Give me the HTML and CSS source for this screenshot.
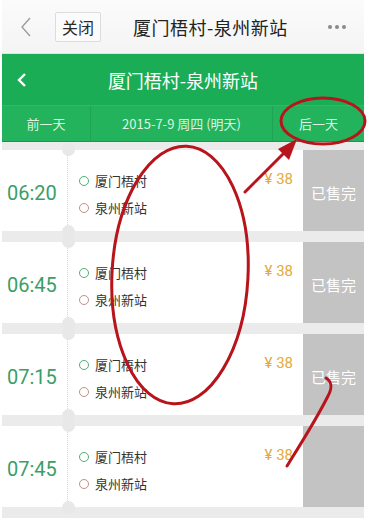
FILE: index.html
```html
<!DOCTYPE html>
<html lang="zh">
<head>
<meta charset="utf-8">
<title>厦门梧村-泉州新站</title>
<link rel="stylesheet" href="styles.css">
</head>
<body>
<div class="screen">
  <header class="topbar">
    <svg class="tb-back" width="12" height="22" viewBox="0 0 12 22"><polyline points="10,2 2,11 10,20" fill="none" stroke="#9a9a9a" stroke-width="1.3"/></svg>
    <button class="tb-close">关闭</button>
    <div class="tb-title">厦门梧村-泉州新站</div>
    <div class="tb-more"><i></i><i></i><i></i></div>
  </header>

  <div class="nav">
    <div class="nav-title">
      <svg class="nav-back" width="10" height="16" viewBox="0 0 10 16"><polyline points="8,2 2,8 8,14" fill="none" stroke="#fff" stroke-width="2.4"/></svg>
      <h1>厦门梧村-泉州新站</h1>
    </div>
    <div class="datebar">
      <div class="cell prev">前一天</div>
      <div class="cell date">2015-7-9 周四 (明天)</div>
      <div class="cell next">后一天</div>
    </div>
  </div>

  <div class="list">
    <div class="trip">
      <div class="time">06:20</div>
      <div class="route">
        <ul class="stations">
          <li class="from">厦门梧村</li>
          <li class="to">泉州新站</li>
        </ul>
        <div class="price">¥ 38</div>
      </div>
      <div class="sold">已售完</div>
    </div>
    <div class="trip">
      <div class="time">06:45</div>
      <div class="route">
        <ul class="stations">
          <li class="from">厦门梧村</li>
          <li class="to">泉州新站</li>
        </ul>
        <div class="price">¥ 38</div>
      </div>
      <div class="sold">已售完</div>
    </div>
    <div class="trip">
      <div class="time">07:15</div>
      <div class="route">
        <ul class="stations">
          <li class="from">厦门梧村</li>
          <li class="to">泉州新站</li>
        </ul>
        <div class="price">¥ 38</div>
      </div>
      <div class="sold">已售完</div>
    </div>
    <div class="trip">
      <div class="time">07:45</div>
      <div class="route">
        <ul class="stations">
          <li class="from">厦门梧村</li>
          <li class="to">泉州新站</li>
        </ul>
        <div class="price">¥ 38</div>
      </div>
      <div class="sold"></div>
    </div>
  </div>

  <svg class="marks" width="367" height="518" viewBox="0 0 367 518">
    <g fill="none" stroke="#b8141c" stroke-width="3" stroke-linecap="round">
      <ellipse cx="180" cy="275" rx="68" ry="129" transform="rotate(3 180 275)"/>
      <ellipse cx="323" cy="121" rx="42" ry="23"/>
      <line x1="245" y1="192" x2="286" y2="151"/>
      <path d="M326 378 C 331 381, 333 387, 328 396 C 316 420, 300 445, 287 466"/>
    </g>
    <polygon points="297,139 278,149 289,160" fill="#b8141c"/>
  </svg>
</div>
</body>
</html>
```

FILE: styles.css
```css
* { box-sizing: border-box; }
html, body { margin: 0; padding: 0; background: #fff; }
body {
  width: 367px;
  height: 518px;
  overflow: hidden;
  font-family: "Noto Sans", "Noto Sans CJK SC", sans-serif;
}
.screen {
  position: relative;
  width: 362px;
  margin-left: 2px;
  height: 518px;
}

/* top browser bar */
.topbar {
  height: 54px;
  display: flex;
  align-items: center;
  background: linear-gradient(#fbfbfb, #f4f4f4);
  border-bottom: 1px solid #e2e2e2;
  padding-left: 18px;
}
.tb-back { flex: none; }
.tb-close {
  margin-left: 23px;
  height: 30px;
  width: 46px;
  padding: 0;
  border: 1px solid #dcdcdc;
  border-radius: 2px;
  background: #fbfbfb;
  font-family: "Noto Sans CJK SC", sans-serif;
  font-size: 16px;
  color: #2a2a2a;
}
.tb-title {
  margin-left: 32px;
  font-family: "Noto Sans CJK SC", sans-serif;
  font-size: 18px;
  letter-spacing: 0.5px;
  color: #222;
}
.tb-more {
  margin-left: auto;
  margin-right: 18px;
  display: flex;
  gap: 3px;
}
.tb-more i {
  width: 4px;
  height: 4px;
  border-radius: 50%;
  background: #8a8a8a;
}

/* green header */
.nav-title {
  height: 51px;
  background: #1bad56;
  display: flex;
  align-items: center;
  justify-content: center;
  position: relative;
}
.nav-back { position: absolute; left: 15px; top: 18px; }
.nav-title h1 {
  margin: 0;
  font-family: "Noto Sans CJK SC", sans-serif;
  font-weight: 400;
  font-size: 18px;
  color: #fff;
}
.datebar {
  height: 37px;
  display: grid;
  grid-template-columns: 88px 182px 92px;
  background: #22b35c;
  border-top: 1px solid #2cbb64;
  border-bottom: 1px solid #159a4b;
}
.cell {
  display: flex;
  align-items: center;
  justify-content: center;
  font-family: "Noto Sans CJK SC", sans-serif;
  font-size: 13px;
  color: #def4e2;
}
.cell + .cell { border-left: 1px solid #1ea452; }

/* list */
.list {
  background: #ebebeb;
  padding-top: 8px;
  height: 376px;
  overflow: hidden;
}
.trip {
  position: relative;
  height: 81px;
  margin-bottom: 11px;
  background: #fff;
  display: grid;
  grid-template-columns: 65px 1fr 61px;
}
.trip::before,
.trip::after {
  content: "";
  position: absolute;
  left: 60px;
  width: 13px;
  height: 13px;
  border-radius: 50%;
  background: #e8e8e8;
}
.trip::before { top: -7px; }
.trip::after { bottom: -7px; }
.time {
  display: flex;
  align-items: center;
  padding-left: 5px;
  padding-top: 5px;
  font-family: Roboto, "Noto Sans", sans-serif;
  font-size: 20px;
  color: #3a9e66;
}
.route {
  display: flex;
  border-left: 1px dotted #d6d6d6;
  margin: 6px 0;
}
.stations {
  list-style: none;
  margin: 0;
  padding: 11px 0 0 11px;
  flex: 1;
}
.stations li {
  display: flex;
  align-items: center;
  height: 27px;
  font-family: "Noto Sans CJK SC", sans-serif;
  font-size: 13px;
  color: #333;
}
.stations li::before {
  content: "";
  width: 8px;
  height: 8px;
  border-radius: 50%;
  margin-right: 6px;
  border: 1px solid #4caf74;
}
.stations li.to::before { border-color: #c38e86; }
.price {
  padding: 13px 10px 0 0;
  line-height: 20px;
  font-family: Roboto, "Noto Sans", sans-serif;
  font-size: 15px;
  color: #e6a837;
}
.sold {
  background: #c3c3c3;
  display: flex;
  align-items: center;
  justify-content: center;
  padding-top: 3px;
  font-family: "Noto Sans CJK SC", sans-serif;
  font-size: 15px;
  color: #fff;
}

.marks {
  position: absolute;
  left: -2px;
  top: 0;
  pointer-events: none;
}
```
